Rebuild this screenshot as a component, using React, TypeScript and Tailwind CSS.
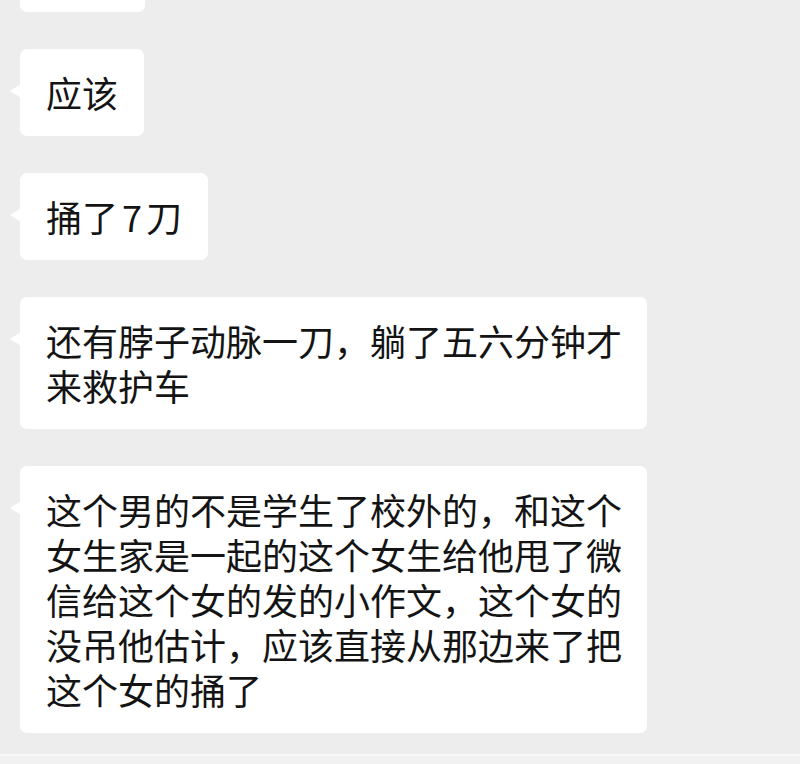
import React from "react";

type BubbleProps = {
  children?: React.ReactNode;
  className?: string;
};

function Bubble({ children, className = "pr-[26px]" }: BubbleProps) {
  return (
    <div
      className={`relative shrink-0 self-start rounded-[7px] bg-white pl-[26px] py-[21px] text-[36px] leading-[45px] text-[#141414] ${className}`}
    >
      <span className="absolute left-[-10px] top-[35px] h-0 w-0 border-y-[7px] border-r-[11px] border-y-transparent border-r-white" />
      {children}
    </div>
  );
}

export default function App() {
  return (
    <div
      className="flex h-[764px] w-[800px] flex-col gap-[37px] overflow-hidden bg-[#ededed] pl-[20px]"
      style={{ fontFamily: '"Noto Sans CJK SC", "Noto Sans", sans-serif' }}
    >
      <Bubble className="-mt-[75px] h-[87px] w-[125px]" />
      <Bubble>应该</Bubble>
      <Bubble>
        捅了<span className="mx-[4px]">7</span>刀
      </Bubble>
      <Bubble className="w-[627px] pr-[16px]">
        还有脖子动脉一刀，躺了五六分钟才来救护车
      </Bubble>
      <Bubble className="w-[627px] pr-[16px]">
        这个男的不是学生了校外的，和这个女生家是一起的这个女生给他甩了微信给这个女的发的小作文，这个女的没吊他估计，应该直接从那边来了把这个女的捅了
      </Bubble>
      {/* input bar edge at the bottom */}
      <div className="-ml-[20px] -mt-[16px] h-[20px] shrink-0 self-stretch border-t-2 border-[#f7f7f7] bg-[#f1f1f1]" />
    </div>
  );
}
